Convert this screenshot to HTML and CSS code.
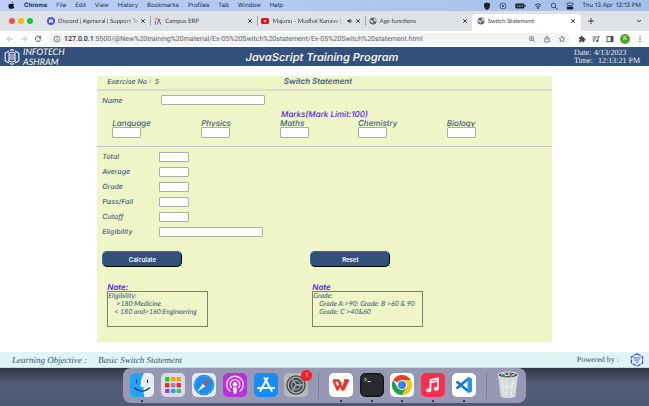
FILE: index.html
```html
<!DOCTYPE html>
<html lang="en">
<head>
<meta charset="utf-8">
<title>Switch Statement</title>
<link rel="stylesheet" href="styles.css">
</head>
<body>
<svg class="defs" width="0" height="0" aria-hidden="true">
  <symbol id="close" viewBox="0 0 6 6"><path d="M1.2 1.2 4.8 4.8M4.8 1.2 1.2 4.8" stroke="#3c4043" stroke-width="1" fill="none"/></symbol>
  <symbol id="globe" viewBox="0 0 16 16"><circle cx="8" cy="8" r="7" fill="#5f6368"/><path d="M3 5.500 6 7.500 9 7.500 8 10 6 13.500 5.500 10.500 2 8Z M9 2 13 4.500 14 8 11.500 9 10 6Z" fill="#eceef1"/></symbol>
</svg>

<nav class="menubar" aria-label="System menu">
  <svg class="apple" viewBox="0 0 14 16"><path d="M10 0c.2 1.800-1.300 3.500-3 3.500C6.800 1.800 8.300.2 10 0ZM7 4.800C8 4.800 8.800 4 10.200 4c1.100 0 2.200.6 2.900 1.500-2.700 1.700-2.200 5.200.6 6.200-.8 2.100-2.100 4-3.600 4-1.100 0-1.500-.7-3-.7s-1.900.7-3 .7C1.900 15.700 0 12 0 9c0-3.100 1.900-5 4-5 1.300 0 2.200.8 3 .8Z" fill="#14171d"/></svg>
  <b>Chrome</b><span>File</span><span>Edit</span><span>View</span><span>History</span><span>Bookmarks</span><span>Profiles</span><span>Tab</span><span>Window</span><span>Help</span>
  <div class="status">
    <svg viewBox="0 0 8 8"><path d="M4 .5 7 1.500v3Q6.500 7 4 8 1.500 7 1 4.500v-3Z" fill="#1c2433"/></svg>
    <svg viewBox="0 0 8 8"><circle cx="4" cy="4" r="3" fill="none" stroke="#26344f" stroke-width=".7"/><path d="M3.200 2.500 5.500 4 3.200 5.500Z" fill="#26344f"/></svg>
    <svg class="battery" viewBox="0 0 11 8"><rect x=".3" y="1.500" width="9" height="5" rx="1" fill="#1a2233"/><path d="M10 3v2" stroke="#1a2233"/><path d="M2 4h1.500M4.200 4h1.500M6.500 4H8" stroke="#b9cdf0" stroke-width="1"/></svg>
    <svg viewBox="0 0 8 8"><path d="M.8 3.200Q4 .2 7.200 3.200M2 4.700Q4 2.800 6 4.700" fill="none" stroke="#26344f" stroke-width=".9"/><circle cx="4" cy="6" r=".9" fill="#26344f"/></svg>
    <svg viewBox="0 0 8 8"><circle cx="3.500" cy="3.500" r="2.300" fill="none" stroke="#26344f" stroke-width=".8"/><path d="M5.200 5.200 7.500 7.500" stroke="#26344f" stroke-width=".9"/></svg>
    <svg viewBox="0 0 8 8"><rect x="1" y="1" width="6" height="2.500" rx="1" fill="none" stroke="#1a2233" stroke-width=".7"/><rect x=".8" y="4.500" width="6.400" height="3" rx="1" fill="#1a2233"/></svg>
    <span>Thu 13 Apr&nbsp; 12:13 PM</span>
  </div>
</nav>

<div class="tabs">
  <div class="lights"><i class="red"></i><i class="yellow"></i><i class="green"></i></div>
  <div class="tab">
    <svg viewBox="0 0 8 8"><circle cx="4" cy="4" r="4" fill="#5551ef"/><path d="M1.800 5.500Q1.800 2.800 2.800 2.400H5.200Q6.200 2.800 6.200 5.500L5.200 5.900 4.800 5.300H3.200L2.800 5.900Z" fill="#fff"/><circle cx="3.200" cy="4.200" r=".5" fill="#5551ef"/><circle cx="4.800" cy="4.200" r=".5" fill="#5551ef"/></svg>
    <span class="fade">Discord | #general | Support Te</span><svg class="x"><use href="#close"/></svg>
  </div>
  <div class="tab">
    <svg viewBox="0 0 8 8"><path d="M1.500 8Q.5 4.500 2 3.500M4 7.500Q3 5 4.500 4.500L6 5 7 7.500" stroke="#9850ad" fill="none"/><circle cx="1.500" cy="1.500" r="1" fill="#e49a57"/><circle cx="5" cy="3" r="1.200" fill="#8b55bd"/><circle cx="3.300" cy="1.800" r=".8" fill="#cf68a0"/></svg>
    <span>Campus ERP</span><svg class="x"><use href="#close"/></svg>
  </div>
  <div class="tab">
    <svg viewBox="0 0 8 8"><rect y="1" width="8" height="6" rx="1.600" fill="#f20d0d"/><path d="M3.200 2.600 5.600 4 3.200 5.400Z" fill="#fff"/></svg>
    <span class="fade">Majunu - Mudhal Kanave |</span>
    <svg class="x" viewBox="0 0 6 6"><path d="M.5 2H2L3.600.6V5.400L2 4H.5Z" fill="#3c4043"/><path d="M4.500 2Q5.200 3 4.500 4" stroke="#3c4043" stroke-width=".6" fill="none"/></svg>
    <svg class="x"><use href="#close"/></svg>
  </div>
  <div class="tab last"><svg><use href="#globe"/></svg><span>Age functions</span><svg class="x"><use href="#close"/></svg></div>
  <div class="tab active"><svg><use href="#globe"/></svg><span>Switch Statement</span><svg class="x"><use href="#close"/></svg></div>
  <div class="tab-end">
    <svg viewBox="0 0 8 8"><path d="M4 1V7M1 4H7" stroke="#333" stroke-width=".9"/></svg>
    <svg viewBox="0 0 8 8"><path d="M2 3 4 5 6 3" stroke="#333" stroke-width=".9" fill="none"/></svg>
  </div>
</div>

<div class="toolbar">
  <div class="nav-icons">
    <svg viewBox="0 0 8 8"><path d="M7 4H1.500M4 1.300 1.300 4 4 6.700" stroke="#a3a6aa" stroke-width=".8" fill="none"/></svg>
    <svg viewBox="0 0 8 8"><path d="M1 4H6.500M4 1.300 6.700 4 4 6.700" stroke="#a3a6aa" stroke-width=".8" fill="none"/></svg>
    <svg viewBox="0 0 8 8"><path d="M6.400 2.400A2.700 2.700 0 1 0 6.700 4.500" stroke="#45484c" stroke-width=".9" fill="none"/><path d="M7 .8V3.500H4.300Z" fill="#45484c"/></svg>
  </div>
  <div class="address">
    <svg viewBox="0 0 8 8"><circle cx="4" cy="4" r="2.900" fill="none" stroke="#55585c" stroke-width=".7"/><path d="M4 3.600V5.500M4 2.300V3" stroke="#55585c" stroke-width=".8"/></svg>
    <span class="url"><b>127.0.0.1</b>:5500/@New%20training%20material/Ex-05%20Switch%20statement/Ex-05%20Switch%20statement.html</span>
    <svg viewBox="0 0 8 8"><circle cx="3.500" cy="3.500" r="2.200" fill="none" stroke="#55585c" stroke-width=".7"/><path d="M5 5 7 7M2.500 3.500h2M3.500 2.500v2" stroke="#55585c" stroke-width=".7"/></svg>
    <svg viewBox="0 0 8 8"><path d="M3 3H1.800V7H6.200V3H5M4 5V1.200M2.800 2.300 4 1.100 5.200 2.300" fill="none" stroke="#55585c" stroke-width=".7"/></svg>
    <svg viewBox="0 0 8 8"><path d="m4 1 .9 2 2.100.2-1.600 1.400.5 2.100L4 5.600 2.100 6.700l.5-2.100L1 3.200 3.100 3Z" fill="none" stroke="#55585c" stroke-width=".6"/></svg>
  </div>
  <div class="tools">
    <svg viewBox="0 0 8 8"><path d="M1 2.200H2.700Q2.500.7 3.700.7T4.700 2.200H6.300V3.800Q7.600 3.700 7.600 4.700T6.300 5.600V7.300H4.700Q4.600 6.200 3.700 6.200T2.700 7.300H1V5.600Q2 5.500 2 4.700T1 3.800Z" fill="#45484c"/></svg>
    <svg viewBox="0 0 8 8"><path d="M.5 2H5M.5 4H4M.5 6H3M6 6V1.700H7.800" stroke="#45484c" stroke-width=".9" fill="none"/><circle cx="5.200" cy="6" r="1.100" fill="#45484c"/></svg>
    <svg viewBox="0 0 8 8"><rect x="1" y="1.500" width="6" height="5.200" fill="none" stroke="#45484c" stroke-width=".9"/><path d="M4.700 1.500H7V6.700H4.700Z" fill="#45484c"/></svg>
    <span class="avatar">K</span>
    <svg viewBox="0 0 8 8"><circle cx="4" cy="1.600" r=".7" fill="#45484c"/><circle cx="4" cy="4" r=".7" fill="#45484c"/><circle cx="4" cy="6.400" r=".7" fill="#45484c"/></svg>
  </div>
</div>

<header class="banner">
  <div class="brand">
    <svg viewBox="0 0 16 16"><path d="M5 2 1.200 4V12L5 14M11 2 14.800 4V12L11 14M6 1.500 8 .6 10 1.500M6 14.500 8 15.400 10 14.500" fill="none" stroke="#e3eaf4" stroke-width="1.200"/><path d="M4.200 4.200 8 3.200 11.800 4.200M5 6H11M5 8H11M5 10H11M4.200 12 8 13 11.800 12M5 4V12M11 4V12" fill="none" stroke="#e3eaf4" stroke-width="1.100"/></svg>
    <span>INFOTECH<br>ASHRAM</span>
  </div>
  <h1>JavaScript Training Program</h1>
  <dl class="clock"><dt>Date:</dt><dd>4/13/2023</dd><dt>Time:</dt><dd class="time">12:13:21 PM</dd></dl>
</header>

<main>
  <form class="panel">
    <div class="title-row"><span>Exercise No :&nbsp; 5</span><h2>Switch Statement</h2></div>
    <div class="name-row"><label for="name">Name</label><input id="name" type="text"></div>
    <h3>Marks(Mark Limit:100)</h3>
    <div class="marks">
      <label>Language<input type="text"></label>
      <label>Physics<input type="text"></label>
      <label>Maths<input type="text"></label>
      <label>Chemistry<input type="text"></label>
      <label>Biology<input type="text"></label>
    </div>
    <div class="results">
      <label for="total">Total</label><input id="total" type="text">
      <label for="average">Average</label><input id="average" type="text">
      <label for="grade">Grade</label><input id="grade" type="text">
      <label for="pass">Pass/Fail</label><input id="pass" type="text">
      <label for="cutoff">Cutoff</label><input id="cutoff" type="text">
      <label for="eligibility">Eligibility</label><input id="eligibility" class="wide" type="text">
    </div>
    <div class="actions"><button type="button">Calculate</button><button type="reset">Reset</button></div>
    <div class="notes">
      <section><h4>Note:</h4><div class="note">Eligibility:<p class="deep">&gt;180:Medicine</p><p>&lt; 180 and&gt;160:Engineering</p></div></section>
      <section><h4>Note</h4><div class="note">Grade:<p>Grade A:&gt;90: Grade: B &gt;60 &amp; 90</p><p>Grade: C &gt;40&amp;60</p></div></section>
    </div>
  </form>
</main>

<footer class="objective">
  <i>Learning Objective :</i><i>Basic Switch Statement</i>
  <span class="powered">Powered by :
    <svg viewBox="0 0 14 14"><path d="M7 .8 12.600 3.900V10.100L7 13.200 1.400 10.100V3.900Z" fill="none" stroke="#5145e2" stroke-width="1.300" stroke-dasharray="4 1"/><path d="M3.500 4.500H10.500L7 10.500ZM5.500 4.500 7 8 8.500 4.500" fill="none" stroke="#8792e8" stroke-width="1"/></svg>
  </span>
</footer>

<div class="desktop">
  <div class="dock">
    <span class="app running"><svg viewBox="0 0 24 24"><rect width="24" height="24" rx="5" fill="#e9edf3"/><path d="M14 0H5Q0 0 0 5V19Q0 24 5 24H14.500Q13 19 13.500 14H10.500Q10.500 6 14 0Z" fill="#1da5f8"/><path d="M6.500 7V9.500M17.500 7V9.500M4.500 15Q12 21.500 19.500 15" stroke="#15314c" stroke-width="1.200" fill="none" stroke-linecap="round"/></svg></span>
    <span class="app"><svg viewBox="0 0 24 24"><rect width="24" height="24" rx="5" fill="#dadbe4"/><g><rect x="4" y="4" width="4.500" height="4.500" rx="1" fill="#25c52f"/><rect x="10" y="4" width="4.500" height="4.500" rx="1" fill="#f79e0d"/><rect x="15.500" y="4" width="4.500" height="4.500" rx="1" fill="#f5a60d"/><rect x="4" y="10" width="4.500" height="4.500" rx="1" fill="#e92736"/><rect x="10" y="10" width="4.500" height="4.500" rx="1" fill="#8d9197"/><rect x="15.500" y="10" width="4.500" height="4.500" rx="1" fill="#ed244c"/><rect x="4" y="16" width="4.500" height="4" rx="1" fill="#9b3bd6"/><rect x="10" y="16" width="4.500" height="4" rx="1" fill="#1c9cf4"/><rect x="15.500" y="16" width="4.500" height="4" rx="1" fill="#2bc56a"/></g></svg></span>
    <span class="app"><svg viewBox="0 0 24 24"><rect width="24" height="24" rx="5" fill="#e9e9ec"/><circle cx="12" cy="12" r="10.300" fill="#1c8eea"/><circle cx="12" cy="12" r="8.800" fill="none" stroke="#91cef8" stroke-width="1" stroke-dasharray=".6 1.200"/><path d="M19 5 13.300 13.300 10.700 10.700Z" fill="#f03934"/><path d="M5 19 10.700 10.700 13.300 13.300Z" fill="#f2f4f7"/></svg></span>
    <span class="app"><svg viewBox="0 0 24 24"><rect width="24" height="24" rx="5" fill="#b832d9"/><path d="M7.500 18.500A8.300 8.300 0 1 1 16.500 18.500M8.800 15A4.800 4.800 0 1 1 15.200 15" fill="none" stroke="#f1cffa" stroke-width="1.400"/><circle cx="12" cy="11.300" r="2.200" fill="#fff"/><path d="M10 14.500H14L13.300 20.500H10.700Z" fill="#fff"/></svg></span>
    <span class="app"><svg viewBox="0 0 24 24"><rect width="24" height="24" rx="5" fill="#168df5"/><path d="M13.500 5 6.200 18M10.500 5 17.800 18M4 15H14M17 15H20" stroke="#fff" stroke-width="2" stroke-linecap="round"/></svg></span>
    <span class="app"><svg viewBox="0 0 24 24"><rect width="24" height="24" rx="5" fill="#b9babc"/><circle cx="12" cy="12" r="9.800" fill="#45494e"/><circle cx="12" cy="12" r="7.800" fill="none" stroke="#adb0b2" stroke-width="1.300"/><circle cx="12" cy="12" r="4.500" fill="none" stroke="#8d9194" stroke-width="1.500"/><path d="M12 12H19M12 12 8.500 6M12 12 8.500 18" stroke="#aeb1b3" stroke-width="1.300"/></svg><em>1</em></span>
    <span class="sep"></span>
    <span class="app running"><svg viewBox="0 0 24 24"><rect width="24" height="24" rx="5" fill="#fff"/><path d="M4 7.500H9.500L13.500 16.500 16 9M4.500 7.500 8.500 16.500 12 9M13.500 16.500H14.500L19 7.500H15" fill="none" stroke="#e83528" stroke-width="2.400" stroke-linejoin="round"/></svg></span>
    <span class="app running"><svg viewBox="0 0 24 24"><rect x=".5" y=".5" width="23" height="23" rx="5" fill="#222426" stroke="#111" /><rect x="2" y="2" width="20" height="20" rx="3" fill="#292b2e"/><path d="M4.500 5 6.500 6.500 4.500 8M7.500 8.500H10.500" stroke="#eee" stroke-width="1" fill="none"/></svg></span>
    <span class="app running"><svg viewBox="0 0 24 24"><rect width="24" height="24" rx="5" fill="#fff"/><path d="M12 12 3.300 7A10 10 0 0 1 20.700 7Z" fill="#e43e2d"/><path d="M12 12V7H20.700A10 10 0 0 1 12 22L16.300 14.500Z" fill="#fbc316"/><path d="M3.300 7A10 10 0 0 0 12 22L16.300 14.500 12 12 7.700 14.500Z" fill="#259f4c"/><circle cx="12" cy="12" r="5" fill="#fff"/><circle cx="12" cy="12" r="4" fill="#3c7ff0"/></svg></span>
    <span class="app running"><svg viewBox="0 0 24 24"><rect width="24" height="24" rx="5" fill="#fb2e50"/><path d="M9.500 17V7L17 5.300V15.300M9.500 9.500 17 7.800" fill="none" stroke="#fff" stroke-width="1.700"/><ellipse cx="7.700" cy="17.300" rx="2.500" ry="2" fill="#fff"/><ellipse cx="15.200" cy="15.700" rx="2.500" ry="2" fill="#fff"/></svg></span>
    <span class="app running"><svg viewBox="0 0 24 24"><rect width="24" height="24" rx="5" fill="#fff"/><path d="M16 6 4.500 15.500M4.500 8.500 16 18" stroke="#1478c8" stroke-width="2.600"/><path d="M15.500 3.500 20 5.500V18.500L15.500 20.500Z" fill="#2496e2"/></svg></span>
    <span class="sep"></span>
    <svg class="trash" viewBox="0 0 22 28"><path d="M1 3 3.500 25Q4 27 11 27T18.500 25L21 3Z" fill="#d7d8d8"/><path d="M5 9 7 24M10 10 9 25M16 9 14 24M4 14 10 17 18 12" stroke="#e8e9e9" stroke-width="1.300" fill="none"/><ellipse cx="11" cy="4" rx="10" ry="3" fill="#50565a" stroke="#e6e6e6"/><path d="M4 4 7 2 9 5M11 2 14 5 18 3M8 4.500H12" fill="none" stroke="#d8dfd4" stroke-width="1.200"/><path d="M6 5H8" stroke="#2b9d7a" stroke-width="2"/><path d="M13 4H15" stroke="#c44545" stroke-width="1.500"/></svg>
  </div>
</div>
</body>
</html>
```
FILE: styles.css
```css
* { box-sizing: border-box; }
html { height: 100%; }
body {
  margin: 0;
  min-height: 100%;
  display: flex;
  flex-direction: column;
  font-family: Inter, "Open Sans", sans-serif;
  font-size: 6px;
  text-rendering: geometricPrecision;
  color: #3c4043;
  background: #fff;
}
svg { width: 8px; height: 8px; flex: none; display: block; }
svg.defs { position: absolute; width: 0; height: 0; }
h1, h2, h3, h4, p, dl, dd { margin: 0; font-weight: 500; }

/* System menu */
.menubar {
  display: flex;
  align-items: center;
  gap: 9px;
  height: 11px;
  padding: 0 8px;
  white-space: nowrap;
  color: #1d2c4a;
  background: linear-gradient(90deg, #bccff5, #a4bfea);
}
.menubar .apple { width: 7px; height: 7px; }
.status { margin-left: auto; display: flex; align-items: center; gap: 8px; }
.status .battery { width: 11px; }

/* Browser tabs */
.tabs {
  display: flex;
  align-items: center;
  height: 20px;
  padding-left: 9px;
  background: #dee1e6;
}
.lights { display: flex; gap: 3px; width: 35px; flex: none; }
.lights i { width: 6px; height: 6px; border-radius: 50%; }
.red { background: #fa4c4c; }
.yellow { background: #fcb414; }
.green { background: #14c534; }
.tab {
  flex: 1;
  min-width: 0;
  display: flex;
  align-items: center;
  gap: 2px;
  height: 10px;
  padding: 0 4px 0 3px;
  border-right: 1px solid #a2a6ab;
  white-space: nowrap;
  font-family: Lato, sans-serif;
}
.tab span { flex: 1; min-width: 0; overflow: hidden; padding-left: 1px; }
.tab .x { width: 6px; height: 6px; }
.fade { mask-image: linear-gradient(90deg, #000 80%, #0004); }
.tab.last { border-right: 0; }
.tab.active {
  height: 17px;
  margin-top: 3px;
  padding: 0 5px 3px;
  border: 0;
  border-radius: 4px 4px 0 0;
  background: #fff;
}
.tab-end { flex: none; width: 68px; display: flex; justify-content: space-between; padding: 0 6px; }

.toolbar { display: flex; align-items: center; height: 16px; background: #fff; }
.nav-icons { display: flex; gap: 6px; width: 49px; padding-left: 6px; }
.address {
  flex: 1;
  min-width: 0;
  display: flex;
  align-items: center;
  gap: 7px;
  height: 12px;
  padding: 0 4px;
  border-radius: 6px;
  background: #f1f3f4;
}
.address svg:first-child { margin-right: -4px; }
.url { flex: 1; overflow: hidden; white-space: nowrap; font-size: 7px; font-family: Roboto, sans-serif; color: #5f6368; }
.url b { font-weight: 500; color: #25282c; }
.tools { display: flex; align-items: center; gap: 6px; padding: 0 5px 0 8px; }
.avatar {
  width: 10px;
  height: 10px;
  border-radius: 50%;
  text-align: center;
  line-height: 10px;
  color: #fff;
  background: #4aa527;
}

/* Page banner */
.banner {
  display: grid;
  grid-template-columns: 1fr auto 1fr;
  align-items: center;
  height: 19px;
  padding: 0 9px 0 4px;
  color: #f3eee4;
  background: #32507c;
}
.brand { display: flex; align-items: center; gap: 3px; font: italic 500 9px/10px Lato, sans-serif; }
.brand svg { width: 16px; height: 16px; }
.banner h1 { font-size: 11px; font-style: italic; font-weight: 600; }
.clock {
  justify-self: end;
  display: grid;
  grid-template-columns: 20px auto;
  font: 8px/8px "Liberation Serif", serif;
}
.clock .time { padding-left: 4px; }

/* Exercise form */
main { flex: 1; padding: 10px 15%; }
.panel {
  height: 266px;
  color: #42607c;
  background: #f0f5c8;
  font-size: 7px;
  font-style: italic;
  font-weight: 500;
}
.title-row {
  display: grid;
  grid-template-columns: 39% 1fr;
  align-items: center;
  height: 15px;
  padding: 0 10px;
  padding-bottom: 3px;
  border-bottom: 2px solid #dadbd8;
}
.title-row h2 { padding-left: 7px; font-size: 8px; font-weight: 600; }
.name-row { display: flex; align-items: center; height: 18px; padding: 0 5px; }
.name-row label { width: 59px; }
input {
  min-width: 0;
  height: 10px;
  padding: 0 2px;
  border: 1px solid #adaea8;
  border-radius: 1px;
  background: #fff;
  font: 7px Inter, sans-serif;
}
.name-row input, .results .wide { width: 104px; }
.panel h3 { text-align: center; font-size: 8px; line-height: 10px; color: #4b20e4; }
.marks {
  display: grid;
  grid-template-columns: 89fr 79fr 78fr 89fr 105fr;
  height: 28px;
  padding-left: 15px;
  border-bottom: 1px solid #c4c5c8;
  font-size: 8px;
  line-height: 8px;
}
.marks label { display: flex; flex-direction: column; align-items: flex-start; }
.marks input { width: 29px; height: 11px; }
.results {
  display: grid;
  grid-template-columns: 57px 1fr;
  grid-auto-rows: 15px;
  align-items: center;
  padding: 2px 5px 0;
}
.results input { width: 30px; }
.actions { display: grid; grid-template-columns: 208px 80px; padding: 12px 5px 0; }
button {
  width: 80px;
  height: 16px;
  padding: 0;
  border: 1px outset #1e3152;
  border-radius: 5px;
  color: #fff;
  background: #32507c;
  font: 600 6px Inter, sans-serif;
}
.notes { display: grid; grid-template-columns: 205px auto; justify-content: start; padding: 16px 10px 0; }
.notes h4 { font-size: 8px; line-height: 8px; font-weight: 600; color: #4b20e4; }
.note { width: 101px; height: 36px; border: 1px solid #7c8067; font-family: Lato, sans-serif; line-height: 8px; white-space: nowrap; }
section:last-child .note { width: 111px; }
.note p { padding-left: 6px; }
.note .deep { padding-left: 8px; }

.objective {
  display: flex;
  align-items: center;
  gap: 11px;
  height: 16px;
  padding: 0 5px 0 12px;
  color: #34516f;
  background: #def4f5;
  font: 9px "Liberation Serif", serif;
  border-bottom: 1px solid #c3dcdc;
}
.powered { margin-left: auto; display: flex; align-items: center; gap: 11px; font-size: 8px; }
.powered svg { width: 14px; height: 14px; }

/* Desktop and dock */
.desktop {
  display: flex;
  justify-content: center;
  height: 38px;
  background: linear-gradient(#30384a, #555e78 45%, #4f5873);
}
.dock {
  display: flex;
  align-items: center;
  justify-content: space-between;
  width: 62%;
  min-width: 380px;
  height: 35px;
  padding: 0 7px 1px;
  border-radius: 8px;
  background: #9799b4;
}
.app { position: relative; width: 24px; height: 24px; }
.app svg { width: 24px; height: 24px; }
.running::after {
  content: "";
  position: absolute;
  left: 11px;
  top: 27px;
  width: 2px;
  height: 2px;
  background: #30374d;
}
.app em {
  position: absolute;
  right: -4px;
  top: -3px;
  width: 11px;
  height: 11px;
  border-radius: 50%;
  background: #fa1d25;
  color: #fff;
  font-style: normal;
  line-height: 11px;
  text-align: center;
}
.sep { width: 1px; height: 27px; margin: 0 3px; background: #7e819e; }
.trash { width: 22px; height: 28px; }
```
